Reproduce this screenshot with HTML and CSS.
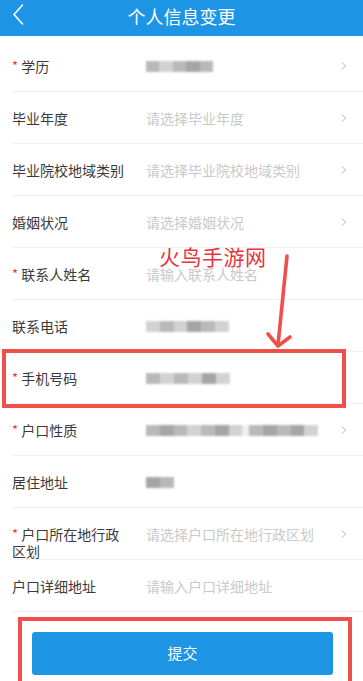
FILE: index.html
```html
<!DOCTYPE html>
<html lang="zh-CN">
<head>
<meta charset="utf-8">
<title>个人信息变更</title>
<link rel="stylesheet" href="styles.css">
</head>
<body>
<div class="page">
  <header class="topbar">
    <svg class="back" width="14" height="24" viewBox="0 0 14 24"><path d="M11.5 3 L3 12.5 L11.5 22" fill="none" stroke="#fff" stroke-width="1.6" stroke-linecap="round" stroke-linejoin="round"/></svg>
    <h1 class="title">个人信息变更</h1>
  </header>

  <ul class="form">
    <li class="row">
      <div class="label"><span class="req">*</span> 学历</div>
      <div class="value"><span class="blur w67"><i></i><i class="l"></i><i></i><i class="d"></i><i></i></span></div>
      <span class="chev"></span>
    </li>
    <li class="row">
      <div class="label">毕业年度</div>
      <div class="value ph">请选择毕业年度</div>
      <span class="chev"></span>
    </li>
    <li class="row">
      <div class="label">毕业院校地域类别</div>
      <div class="value ph">请选择毕业院校地域类别</div>
      <span class="chev"></span>
    </li>
    <li class="row">
      <div class="label">婚姻状况</div>
      <div class="value ph">请选择婚姻状况</div>
      <span class="chev"></span>
    </li>
    <li class="row">
      <div class="label"><span class="req">*</span> 联系人姓名</div>
      <div class="value ph">请输入联系人姓名</div>
    </li>
    <li class="row">
      <div class="label">联系电话</div>
      <div class="value"><span class="blur w83"><i class="l"></i><i></i><i class="l"></i><i class="d"></i><i></i><i class="l"></i></span></div>
    </li>
    <li class="row">
      <div class="label"><span class="req">*</span> 手机号码</div>
      <div class="value"><span class="blur w84"><i></i><i class="l"></i><i></i><i class="l"></i><i class="d"></i><i class="l"></i></span></div>
    </li>
    <li class="row">
      <div class="label"><span class="req">*</span> 户口性质</div>
      <div class="value"><span class="blur w172"><i></i><i class="d"></i><i></i><i class="l"></i><i></i><i class="d"></i><i class="l"></i><i class="gap"></i><i></i><i class="d"></i><i></i><i class="d"></i><i class="l"></i></span></div>
      <span class="chev"></span>
    </li>
    <li class="row">
      <div class="label">居住地址</div>
      <div class="value"><span class="blur w28"><i class="d"></i><i></i></span></div>
    </li>
    <li class="row">
      <div class="label"><span class="req">*</span> 户口所在地行政区划</div>
      <div class="value ph">请选择户口所在地行政区划</div>
      <span class="chev"></span>
    </li>
    <li class="row">
      <div class="label">户口详细地址</div>
      <div class="value ph">请输入户口详细地址</div>
    </li>
  </ul>

  <div class="actions">
    <button class="submit" type="button">提交</button>
  </div>

  <div class="mark mark-phone"></div>
  <div class="mark mark-submit"></div>
  <div class="watermark">火鸟手游网</div>
  <svg class="arrow" width="40" height="100" viewBox="0 0 40 100">
    <path d="M27 2 L18 91" fill="none" stroke="#F0504C" stroke-width="3.6" stroke-linecap="round"/>
    <path d="M8 80 L18 92 L30 83" fill="none" stroke="#F0504C" stroke-width="3.6" stroke-linecap="round" stroke-linejoin="round"/>
  </svg>
</div>
</body>
</html>
```

FILE: styles.css
```css
* { box-sizing: border-box; }
html, body { margin: 0; padding: 0; }
body {
  background: #fff;
  font-family: "Noto Sans CJK SC", "Noto Sans", sans-serif;
  width: 363px;
  height: 681px;
  overflow: hidden;
}
.page {
  position: relative;
  width: 363px;
  height: 681px;
  overflow: hidden;
}
.topbar {
  height: 36px;
  background: #1E94E4;
  display: flex;
  align-items: center;
  justify-content: center;
  position: relative;
}
.back {
  position: absolute;
  left: 11px;
  top: 2px;
}
.title {
  margin: 0;
  margin-top: -4px;
  font-size: 18px;
  font-weight: 400;
  color: #fff;
}
.form {
  list-style: none;
  margin: 4px 0 0 0;
  padding: 0 0 0 12px;
}
.row {
  display: flex;
  align-items: flex-start;
  min-height: 52px;
  padding-top: 18px;
  border-bottom: 1px solid #f2f2f2;
  position: relative;
}
.label {
  width: 115px;
  margin-right: 19px;
  font-size: 14px;
  line-height: 16px;
  color: #3a3a3a;
}
.req {
  color: #e4393c;
  font-size: 13px;
  position: relative;
  top: -1px;
}
.value {
  flex: 1;
  font-size: 14px;
  line-height: 16px;
  color: #3a3a3a;
  height: 16px;
  display: flex;
  align-items: center;
}
.value.ph { color: #c9c9c9; }
.chev {
  position: absolute;
  right: 18px;
  top: 23px;
  width: 6px;
  height: 6px;
  border-top: 1px solid #cacaca;
  border-right: 1px solid #cacaca;
  transform: rotate(45deg);
}
.blur {
  display: flex;
  height: 11px;
  filter: blur(1.1px);
}
.blur i {
  flex: 1;
  background: #b9b9b9;
}
.blur i.l { background: #d2d2d2; }
.blur i.d { background: #a5a5a5; }
.blur i.gap { background: #f0f0f0; flex: 0.5; }
.w67 { width: 67px; }
.w83 { width: 83px; }
.w84 { width: 84px; }
.w172 { width: 172px; }
.w28 { width: 28px; }

.actions {
  padding: 20px 30px 0 32px;
}
.submit {
  display: block;
  width: 301px;
  height: 43px;
  border: none;
  border-radius: 3px;
  background: #1E94E4;
  color: #fff;
  font-family: "Noto Sans CJK SC", "Noto Sans", sans-serif;
  font-size: 15px;
  padding: 0 0 2px 0;
}

.mark {
  position: absolute;
  border: 4px solid #F0504C;
}
.mark-phone {
  left: 2px;
  top: 349px;
  width: 344px;
  height: 59px;
}
.mark-submit {
  left: 18px;
  top: 617px;
  width: 334px;
  height: 68px;
}
.watermark {
  position: absolute;
  left: 159px;
  top: 242px;
  font-size: 21px;
  line-height: 28px;
  color: #E8343A;
  letter-spacing: 0.5px;
}
.arrow {
  position: absolute;
  left: 260px;
  top: 254px;
}
```
